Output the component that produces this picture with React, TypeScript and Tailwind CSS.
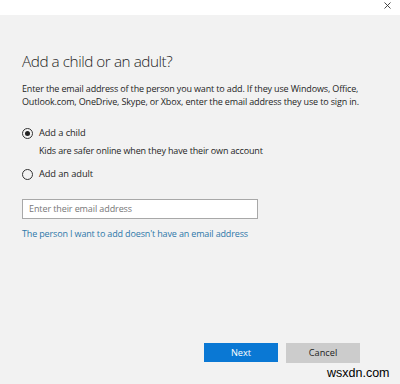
import React from "react";

export default function App() {
  return (
    <div className="w-[400px] h-[384px] bg-[#f2f2f2] flex flex-col text-[#1f1f1f]" style={{ fontFamily: '"Open Sans", "Noto Sans", sans-serif' }}>
      <div className="h-[15px] bg-white flex justify-end items-start pr-[9px] pt-[2px]">
        <svg width="7" height="7" viewBox="0 0 7 7" className="block">
          <path d="M0.5 0.5 L6.5 6.5 M6.5 0.5 L0.5 6.5" stroke="#333" strokeWidth="0.9" fill="none" />
        </svg>
      </div>
      <div className="flex-1 flex flex-col px-[22px]">
        <h1 className="mt-[35px] text-[15.3px] leading-[22px] font-light tracking-[-0.45px]">Add a child or an adult?</h1>
        <p className="mt-[10px] text-[9px] leading-[13px] tracking-[-0.15px]">
          Enter the email address of the person you want to add. If they use Windows, Office, Outlook.com, OneDrive, Skype, or Xbox, enter the email address they use to sign in.
        </p>
        <div className="mt-[18px] flex items-center gap-[6px] h-[14px]">
          <span className="w-[11px] h-[11px] rounded-full border border-[#333] flex items-center justify-center">
            <span className="w-[5px] h-[5px] rounded-full bg-[#222]" />
          </span>
          <span className="text-[9.3px] tracking-[-0.1px]">Add a child</span>
        </div>
        <div className="mt-[4px] pl-[17px] text-[9px] leading-[14px] tracking-[-0.15px]">Kids are safer online when they have their own account</div>
        <div className="mt-[9px] flex items-center gap-[6px] h-[14px]">
          <span className="w-[11px] h-[11px] rounded-full border border-[#333]" />
          <span className="text-[9.3px] tracking-[-0.1px]">Add an adult</span>
        </div>
        <div className="mt-[18px] w-[236px] h-[20px] border border-[#a8a8a8] bg-white flex items-center px-[6px] text-[9px] tracking-[-0.1px] text-[#777]">
          Enter their email address
        </div>
        <div className="mt-[8px] text-[9px] leading-[14px] tracking-[-0.15px] text-[#2e78a9]">The person I want to add doesn't have an email address</div>
        <div className="mt-auto mb-[21px] flex justify-end gap-[8px] pr-[18px]">
          <button className="w-[74px] h-[19px] bg-[#0a78d4] text-white text-[9.2px]">Next</button>
          <button className="w-[74px] h-[20px] bg-[#cccccc] text-[#222] text-[9.2px]">Cancel</button>
        </div>
      </div>
      <div className="absolute left-[327px] top-[365px] text-[12.5px] leading-[16px] text-black" style={{ fontFamily: '"Liberation Sans", Arial, sans-serif' }}>wsxdn.com</div>
    </div>
  );
}
